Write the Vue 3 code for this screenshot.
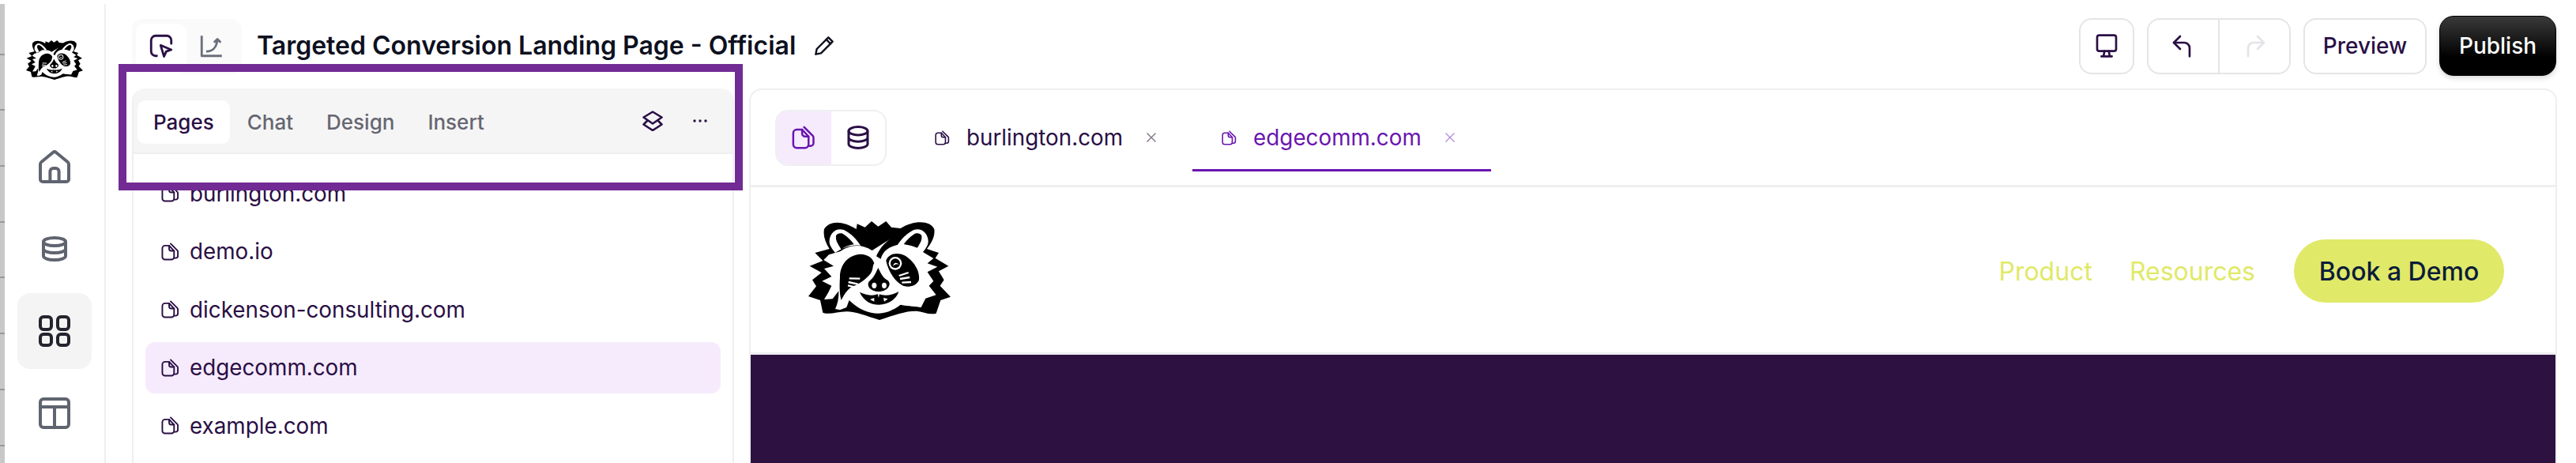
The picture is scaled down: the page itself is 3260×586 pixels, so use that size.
<template>
	<div class="page">
		<div class="edge"></div>

		<nav class="rail">
			<svg class="logo-small"><use href="#raccoon" /></svg>
			<div class="rail-items">
				<a v-for="item in railItems" :key="item.name" class="rail-item" :class="{active: item.active}">
					<svg viewBox="0 0 24 24" width="48" height="48" fill="none" stroke="currentColor" stroke-width="2" stroke-linecap="round" stroke-linejoin="round">
						<path v-for="d in item.paths" :key="d" :d="d" />
					</svg>
				</a>
			</div>
		</nav>

		<div class="main">
			<header class="topbar">
				<div class="mode-switch">
					<button class="mode-btn on">
						<svg viewBox="0 0 24 24" width="34" height="34" fill="none" stroke="currentColor" stroke-width="2" stroke-linecap="round" stroke-linejoin="round">
							<path d="M8 21H7a4 4 0 0 1-4-4V7a4 4 0 0 1 4-4h10a4 4 0 0 1 4 4v3" />
							<path d="M11.500 11.500l9.500 4-4.500 1.500-2 4.500z" />
						</svg>
					</button>
					<button class="mode-btn">
						<svg viewBox="0 0 24 24" width="34" height="34" fill="none" stroke="currentColor" stroke-width="2" stroke-linejoin="round">
							<path d="M3 3v18h18" />
							<path d="M7 17c6 0 9-3 10-10" />
							<path d="M14 9l3-3 3 3" />
						</svg>
					</button>
				</div>
				<h1 class="title">Targeted Conversion Landing Page - Official</h1>
				<svg class="pencil" viewBox="0 0 24 24" width="32" height="32" fill="none" stroke="currentColor" stroke-width="1.800" stroke-linecap="round" stroke-linejoin="round">
					<path d="M4 20l1-5L16 4l4 4L9 19z" />
					<path d="M14 6l4 4" />
				</svg>

				<div class="actions">
					<button class="tool">
						<svg viewBox="0 0 24 24" width="32" height="32" fill="none" stroke="currentColor" stroke-width="2" stroke-linecap="round" stroke-linejoin="round">
							<rect x="3" y="2" width="18" height="15" rx="2" />
							<path d="M10 17l-1 5h6l-1-5M7 22h10" />
						</svg>
					</button>
					<div class="history">
						<button class="tool-part">
							<svg viewBox="0 0 24 24" width="32" height="32" fill="none" stroke="currentColor" stroke-width="2" stroke-linecap="round" stroke-linejoin="round">
								<path d="M9 3L3 9l6 6" />
								<path d="M3 9h10a5 5 0 0 1 5 5v8" />
							</svg>
						</button>
						<button class="tool-part off">
							<svg viewBox="0 0 24 24" width="32" height="32" fill="none" stroke="currentColor" stroke-width="2" stroke-linecap="round" stroke-linejoin="round">
								<path d="M15 3l6 6-6 6" />
								<path d="M21 9H11a5 5 0 0 0-5 5v8" />
							</svg>
						</button>
					</div>
					<button class="preview">Preview</button>
					<button class="publish">Publish</button>
				</div>
			</header>

			<div class="workspace">
				<aside class="panel">
					<div class="panel-tabs">
						<button v-for="(t, i) in panelTabs" :key="t" class="panel-tab" :class="{active: i === 0}">{{ t }}</button>
						<div class="panel-tools">
							<svg viewBox="0 0 26 26" width="26" height="26" fill="none" stroke="#2a0f45" stroke-width="2.600" stroke-linejoin="round" stroke-linecap="round">
								<path d="M13 1.500l11.500 7-11.500 8-11.500-8z" />
								<path d="M6 13l-4.500 4.500L13 25l11.500-7.500L20 13" />
							</svg>
							<svg viewBox="0 0 18 4" width="18" height="4" fill="#2a0f45">
								<circle cx="2" cy="2" r="1.700" />
								<circle cx="9" cy="2" r="1.700" />
								<circle cx="16" cy="2" r="1.700" />
							</svg>
						</div>
					</div>
					<div class="site-list">
						<div v-for="s in sites" :key="s" class="site" :class="{selected: s === 'edgecomm.com'}">
							<svg class="file" viewBox="0 0 24 24"><use href="#pages" /></svg>
							{{ s }}
						</div>
					</div>
				</aside>

				<section class="preview-pane">
					<div class="pane-tabs">
						<div class="view-switch">
							<div class="view-btn on">
								<svg viewBox="0 0 24 24" width="30" height="30"><use href="#pages" /></svg>
							</div>
							<div class="view-btn">
								<svg viewBox="0 0 24 24" width="36" height="36" fill="none" stroke="currentColor" stroke-width="2">
									<ellipse cx="12" cy="6.500" rx="8" ry="3.500" />
									<path d="M4 6.500v11c0 1.900 3.600 3.500 8 3.500s8-1.600 8-3.500v-11M4 12c0 1.900 3.600 3.500 8 3.500s8-1.600 8-3.500" />
								</svg>
							</div>
						</div>
						<div v-for="t in openTabs" :key="t.name" class="doc-tab" :class="{current: t.current}">
							<svg class="file tab-file" viewBox="0 0 24 24"><use href="#pages" /></svg>
							<span class="doc-name">{{ t.name }}</span>
							<svg class="close" viewBox="0 0 14 14" width="14" height="14" fill="none" stroke="currentColor" stroke-width="1.400">
								<path d="M1.500 1.500l11 11M12.500 1.500l-11 11" />
							</svg>
						</div>
					</div>

					<div class="site-header">
						<svg class="logo-large"><use href="#raccoon" /></svg>
						<div class="site-nav">
							<span class="site-link">Product</span>
							<span class="site-link">Resources</span>
							<span class="cta">Book a Demo</span>
						</div>
					</div>
					<div class="hero"></div>
				</section>
			</div>
		</div>

		<div class="highlight"></div>

		<svg width="0" height="0" class="defs">
			<symbol id="pages" viewBox="0 0 24 24">
				<g fill="none" stroke="currentColor" stroke-width="2" stroke-linejoin="round" stroke-linecap="round">
					<path d="M10.500 4H5a3.500 3.500 0 0 0-3.500 3.500V19A3.500 3.500 0 0 0 5 22.500h8.500A3.500 3.500 0 0 0 17 19v-8z" />
					<path d="M10.500 4v4a3 3 0 0 0 3 3H17" />
					<path d="M12.500 1.500l8.800 8.800a2.500 2.500 0 0 1 .7 1.700v5.500a3 3 0 0 1-3 3h-2" />
				</g>
			</symbol>
			<symbol id="raccoon" viewBox="70 45 540 375">
				<path fill="#000" d="M130 75C150 42 200 42 252 75L255 55 285 68 310 45 335 65 365 45 385 68 420 72C470 42 530 40 548 75 552 105 535 130 520 150L565 165 552 185 602 215 565 235 585 268 570 290 610 332 572 345 555 395C530 402 505 388 480 386 440 385 400 400 340 420 290 405 250 388 215 388 180 388 150 402 125 392L115 345 70 330 100 292 85 268 120 240 75 215 125 195 95 165 150 150C135 125 125 100 130 75Z" />
				<path fill="#fff" d="M150 118C152 90 175 68 205 78 230 90 255 115 268 138 235 132 200 145 172 165 160 150 148 135 150 118ZM525 118C523 90 500 68 470 78 445 90 420 115 407 138 440 132 475 145 503 165 515 150 527 135 525 118Z" />
				<path fill="#000" d="M175 100C180 90 195 88 205 95 220 105 235 120 243 133 225 135 208 142 195 152 185 135 172 120 175 100ZM500 100C495 90 480 88 470 95 455 105 440 120 432 133 450 135 467 142 480 152 490 135 503 120 500 100Z" />
				<path fill="#fff" d="M148 172L190 160C220 138 265 125 312 156L382 112C355 130 338 155 328 178L345 188C352 160 375 140 420 132 460 135 490 145 505 162L545 186 522 205 560 218 522 238 545 272 528 290 555 325 515 338 498 372C480 368 450 368 420 362 390 385 360 395 335 395 300 395 260 380 225 345L215 372 190 382 172 378C182 358 186 335 185 310L162 340 130 342 146 315 158 290 122 272 158 255 130 225 166 215 128 192Z" />
				<path fill="#000" d="M190 258C190 205 225 172 268 170 295 170 315 185 320 205 312 215 318 230 305 245 290 262 270 280 240 292 220 300 205 325 195 345 188 320 188 290 190 258ZM365 195C372 170 405 160 435 175 470 195 495 235 490 268 482 290 455 298 430 290 400 275 375 240 365 195Z" />
				<circle cx="400" cy="205" r="25" fill="#fff" />
				<circle cx="400" cy="205" r="18" fill="#000" />
				<path fill="#fff" d="M392 216C392 202 405 198 414 210 406 206 398 208 392 216Z" />
				<path fill="none" stroke="#fff" stroke-width="7" d="M225 262L266 263M222 276L258 284M220 289L250 296M414 252L450 240M418 264L455 258M425 278L460 276" />
				<path fill="#000" d="M335 222C345 240 350 258 372 270 388 285 370 312 338 312 305 312 288 288 302 272 320 258 326 240 335 222Z" />
				<ellipse cx="320" cy="289" rx="9" ry="11" fill="#fff" />
				<ellipse cx="358" cy="289" rx="9" ry="11" fill="#fff" />
				<path fill="#000" d="M265 314C290 325 315 330 332 322L338 322C360 330 390 326 413 312 405 340 375 362 338 362 305 362 278 345 265 314Z" />
				<path fill="#fff" d="M304 342L320 336 320 350ZM355 336L372 340 358 350ZM333 320L340 320 337 336Z" />
			</symbol>
		</svg>
	</div>
</template>

<script setup>
const railItems = [
	{name: "home", paths: ["M3 10.500c0-.6.3-1.200.7-1.500L11 3a1.500 1.500 0 0 1 2 0l7.300 6c.4.3.7.9.7 1.500V20a1.500 1.500 0 0 1-1.500 1.500h-15A1.500 1.500 0 0 1 3 20z", "M9.200 21.500V15a2 2 0 0 1 2-2h1.600a2 2 0 0 1 2 2v6.500"]},
	{name: "data", paths: ["M5 7.500c0-1.400 3.100-2.500 7-2.500s7 1.100 7 2.500-3.100 2.500-7 2.500-7-1.100-7-2.500z", "M5 7.500v9c0 1.400 3.100 2.500 7 2.500s7-1.100 7-2.500v-9", "M5 12c0 1.400 3.100 2.500 7 2.500s7-1.100 7-2.500"]},
	{name: "apps", active: true, paths: ["M5 3h3a2 2 0 0 1 2 2v4a2 2 0 0 1-2 2H5a2 2 0 0 1-2-2V5a2 2 0 0 1 2-2z", "M16 3h3a2 2 0 0 1 2 2v4a2 2 0 0 1-2 2h-3a2 2 0 0 1-2-2V5a2 2 0 0 1 2-2z", "M5 14h3a2 2 0 0 1 2 2v3a2 2 0 0 1-2 2H5a2 2 0 0 1-2-2v-3a2 2 0 0 1 2-2z", "M16 14h3a2 2 0 0 1 2 2v3a2 2 0 0 1-2 2h-3a2 2 0 0 1-2-2v-3a2 2 0 0 1 2-2z"]},
	{name: "layout", paths: ["M5 3h14a2 2 0 0 1 2 2v14a2 2 0 0 1-2 2H5a2 2 0 0 1-2-2V5a2 2 0 0 1 2-2z", "M3 8h18", "M12 8v13"]}
]

const panelTabs = ["Pages", "Chat", "Design", "Insert"]
const sites = ["burlington.com", "demo.io", "dickenson-consulting.com", "edgecomm.com", "example.com"]
const openTabs = [
	{name: "burlington.com"},
	{name: "edgecomm.com", current: true}
]
</script>

<style>
html, body {
	margin: 0;
	background: #fff;
}
</style>

<style scoped>
.page {
	position: relative;
	display: flex;
	width: 3260px;
	height: 586px;
	overflow: hidden;
	background: #fff;
	font-family: Inter, "Liberation Sans", sans-serif;
	color: #2a0f45;
	border-top: 5px solid #fff;
	box-sizing: border-box;
}

.page::before {
	content: "";
	position: absolute;
	left: 6px;
	right: 0;
	top: -3px;
	height: 2px;
	background: #e8e2f5;
}

.edge {
	flex: none;
	width: 6px;
	margin-top: -5px;
	background: repeating-linear-gradient(#c8c8c8 0, #c8c8c8 67.7px, #999 67.7px, #999 69.7px, #c8c8c8 69.7px, #c8c8c8 70.7px);
}

.rail {
	flex: none;
	width: 128px;
	box-sizing: border-box;
	border-right: 2px solid #efeff1;
	display: flex;
	flex-direction: column;
	align-items: center;
	margin-top: -1px;
}

.logo-small {
	width: 72px;
	height: 50px;
	margin-top: 47px;
}

.rail-items {
	display: flex;
	flex-direction: column;
	align-items: center;
	gap: 8px;
	margin-top: 62px;
}

.rail-item {
	display: flex;
	align-items: center;
	justify-content: center;
	width: 94px;
	height: 96px;
	color: #5f6470;
	border-radius: 16px;
}

.rail-item.active {
	background: #f4f4f4;
	color: #24242e;
}

.main {
	flex: 1;
	min-width: 0;
	display: flex;
	flex-direction: column;
}

.topbar {
	flex: none;
	height: 107px;
	display: flex;
	align-items: flex-start;
	padding-left: 33px;
	padding-right: 25px;
}

button {
	font: inherit;
	color: inherit;
	background: none;
	border: 0;
	padding: 0;
}

.mode-switch {
	display: flex;
	margin-top: 19px;
	padding: 6px 5px 0;
	width: 139px;
	height: 70px;
	box-sizing: border-box;
	background: #fafafa;
	border-radius: 14px;
}

.mode-btn {
	width: 64px;
	height: 64px;
	padding-bottom: 8px;
	box-sizing: border-box;
	border-radius: 10px;
	display: flex;
	align-items: center;
	justify-content: center;
	color: #6b6f7b;
}

.mode-btn.on {
	background: #fff;
	color: #2a0f45;
}

.title {
	margin: 31px 0 0 19px;
	font-size: 32px;
	line-height: 44px;
	font-weight: 600;
	color: #0d1020;
	white-space: nowrap;
}

.pencil {
	margin: 37px 0 0 20px;
	color: #0d1020;
}

.actions {
	margin-left: auto;
	display: flex;
	align-items: center;
	gap: 16px;
	margin-top: 15px;
}

.tool, .preview, .history {
	height: 71px;
	box-sizing: border-box;
	border: 2px solid #e5e5e8;
	border-radius: 16px;
	background: #fff;
}

.tool {
	width: 70px;
	display: flex;
	align-items: center;
	justify-content: center;
}

.history {
	display: flex;
	width: 182px;
}

.tool-part {
	flex: 1;
	display: flex;
	align-items: center;
	justify-content: center;
}

.tool-part + .tool-part {
	border-left: 2px solid #e5e5e8;
}

.tool-part.off {
	color: #e3e4e8;
}

.preview {
	width: 156px;
	font-size: 28px;
	font-weight: 500;
}

.publish {
	width: 148px;
	height: 76px;
	border-radius: 18px;
	background: linear-gradient(#3a3a3a, #000 70%);
	border: 1px solid #000;
	color: #fff;
	font-size: 28px;
	font-weight: 500;
	box-shadow: 0 3px 6px rgba(0, 0, 0, 0.15);
}

.workspace {
	flex: 1;
	min-height: 0;
	display: flex;
	align-items: flex-start;
	padding-left: 33px;
	gap: 19px;
}

.panel {
	flex: none;
	width: 762px;
	height: 600px;
	box-sizing: border-box;
	border-left: 2px solid #efeff1;
	border-right: 2px solid #efeff1;
	border-top-left-radius: 16px;
	border-top-right-radius: 16px;
}

.panel-tabs {
	height: 83px;
	box-sizing: border-box;
	display: flex;
	align-items: center;
	gap: 2px;
	padding: 4px 0 0 5px;
	background: #f5f5f5;
	border-radius: 16px 16px 0 0;
	border-bottom: 2px solid #efeff1;
}

.panel-tab {
	height: 55px;
	padding: 0 20px;
	font-size: 26px;
	color: #666672;
	font-weight: 500;
	border-radius: 10px;
}

.panel-tab.active {
	background: #fff;
	color: #2a0f45;
}

.panel-tools {
	margin-left: auto;
	display: flex;
	align-items: center;
	gap: 38px;
	padding-right: 32px;
	margin-top: -4px;
}

.site-list {
	padding: 17px 15px 0;
}

.site {
	height: 65px;
	margin-bottom: 8.500px;
	padding-left: 20px;
	display: flex;
	align-items: center;
	gap: 13px;
	font-size: 27.800px;
	border-radius: 12px;
}

.site.selected {
	background: #f6ebfc;
}

.file {
	width: 23px;
	height: 23px;
	flex: none;
}

.tab-file {
	width: 19px;
	height: 19px;
}

.preview-pane {
	flex: none;
	width: 2288px;
	height: 600px;
	box-sizing: border-box;
	border: 2px solid #efeff1;
	border-bottom: 0;
	border-radius: 16px 16px 0 0;
}

.pane-tabs {
	height: 123px;
	box-sizing: border-box;
	display: flex;
	align-items: center;
	border-bottom: 3px solid #efeff1;
	padding-left: 31px;
}

.view-switch {
	display: flex;
	height: 71px;
	width: 141px;
	box-sizing: border-box;
	border: 2px solid #efeff1;
	border-radius: 16px;
	overflow: hidden;
	margin-right: 61px;
}

.view-btn {
	flex: 1;
	display: flex;
	align-items: center;
	justify-content: center;
}

.view-btn.on {
	background: #f5ebfc;
	color: #6a15b0;
}

.doc-tab {
	display: flex;
	align-items: center;
	gap: 21px;
	font-size: 27.800px;
	box-sizing: border-box;
	margin-right: 45px;
}

.doc-tab .close {
	margin-left: 8px;
	color: #7f7289;
}

.doc-tab.current {
	align-self: flex-start;
	height: 103px;
	padding: 20px 45px 0 37px;
	margin-right: 0;
	color: #6a15b0;
	border-bottom: 3px solid #6a15b0;
}

.doc-tab.current .close {
	color: #b48fdc;
}

.site-header {
	height: 212px;
	box-sizing: border-box;
	display: flex;
	align-items: flex-start;
	justify-content: space-between;
	border-bottom: 3px solid #efeff1;
}

.logo-large {
	width: 180px;
	height: 125px;
	margin: 43px 0 0 73px;
}

.site-nav {
	display: flex;
	align-items: center;
	margin: 66px 65px 0 0;
}

.site-link {
	color: #e0e968;
	font-size: 32px;
	margin-right: 49px;
}

.site-link:first-child {
	margin-right: 47px;
}

.cta {
	width: 266px;
	height: 80px;
	display: flex;
	align-items: center;
	justify-content: center;
	background: #e0e968;
	color: #0b1c3a;
	border-radius: 40px;
	font-size: 32px;
	font-weight: 500;
}

.hero {
	height: 200px;
	background: #2d1140;
}

.highlight {
	position: absolute;
	left: 150px;
	top: 76px;
	width: 790px;
	height: 160px;
	box-sizing: border-box;
	border: 10px solid #722b94;
}

.defs {
	position: absolute;
}
</style>
